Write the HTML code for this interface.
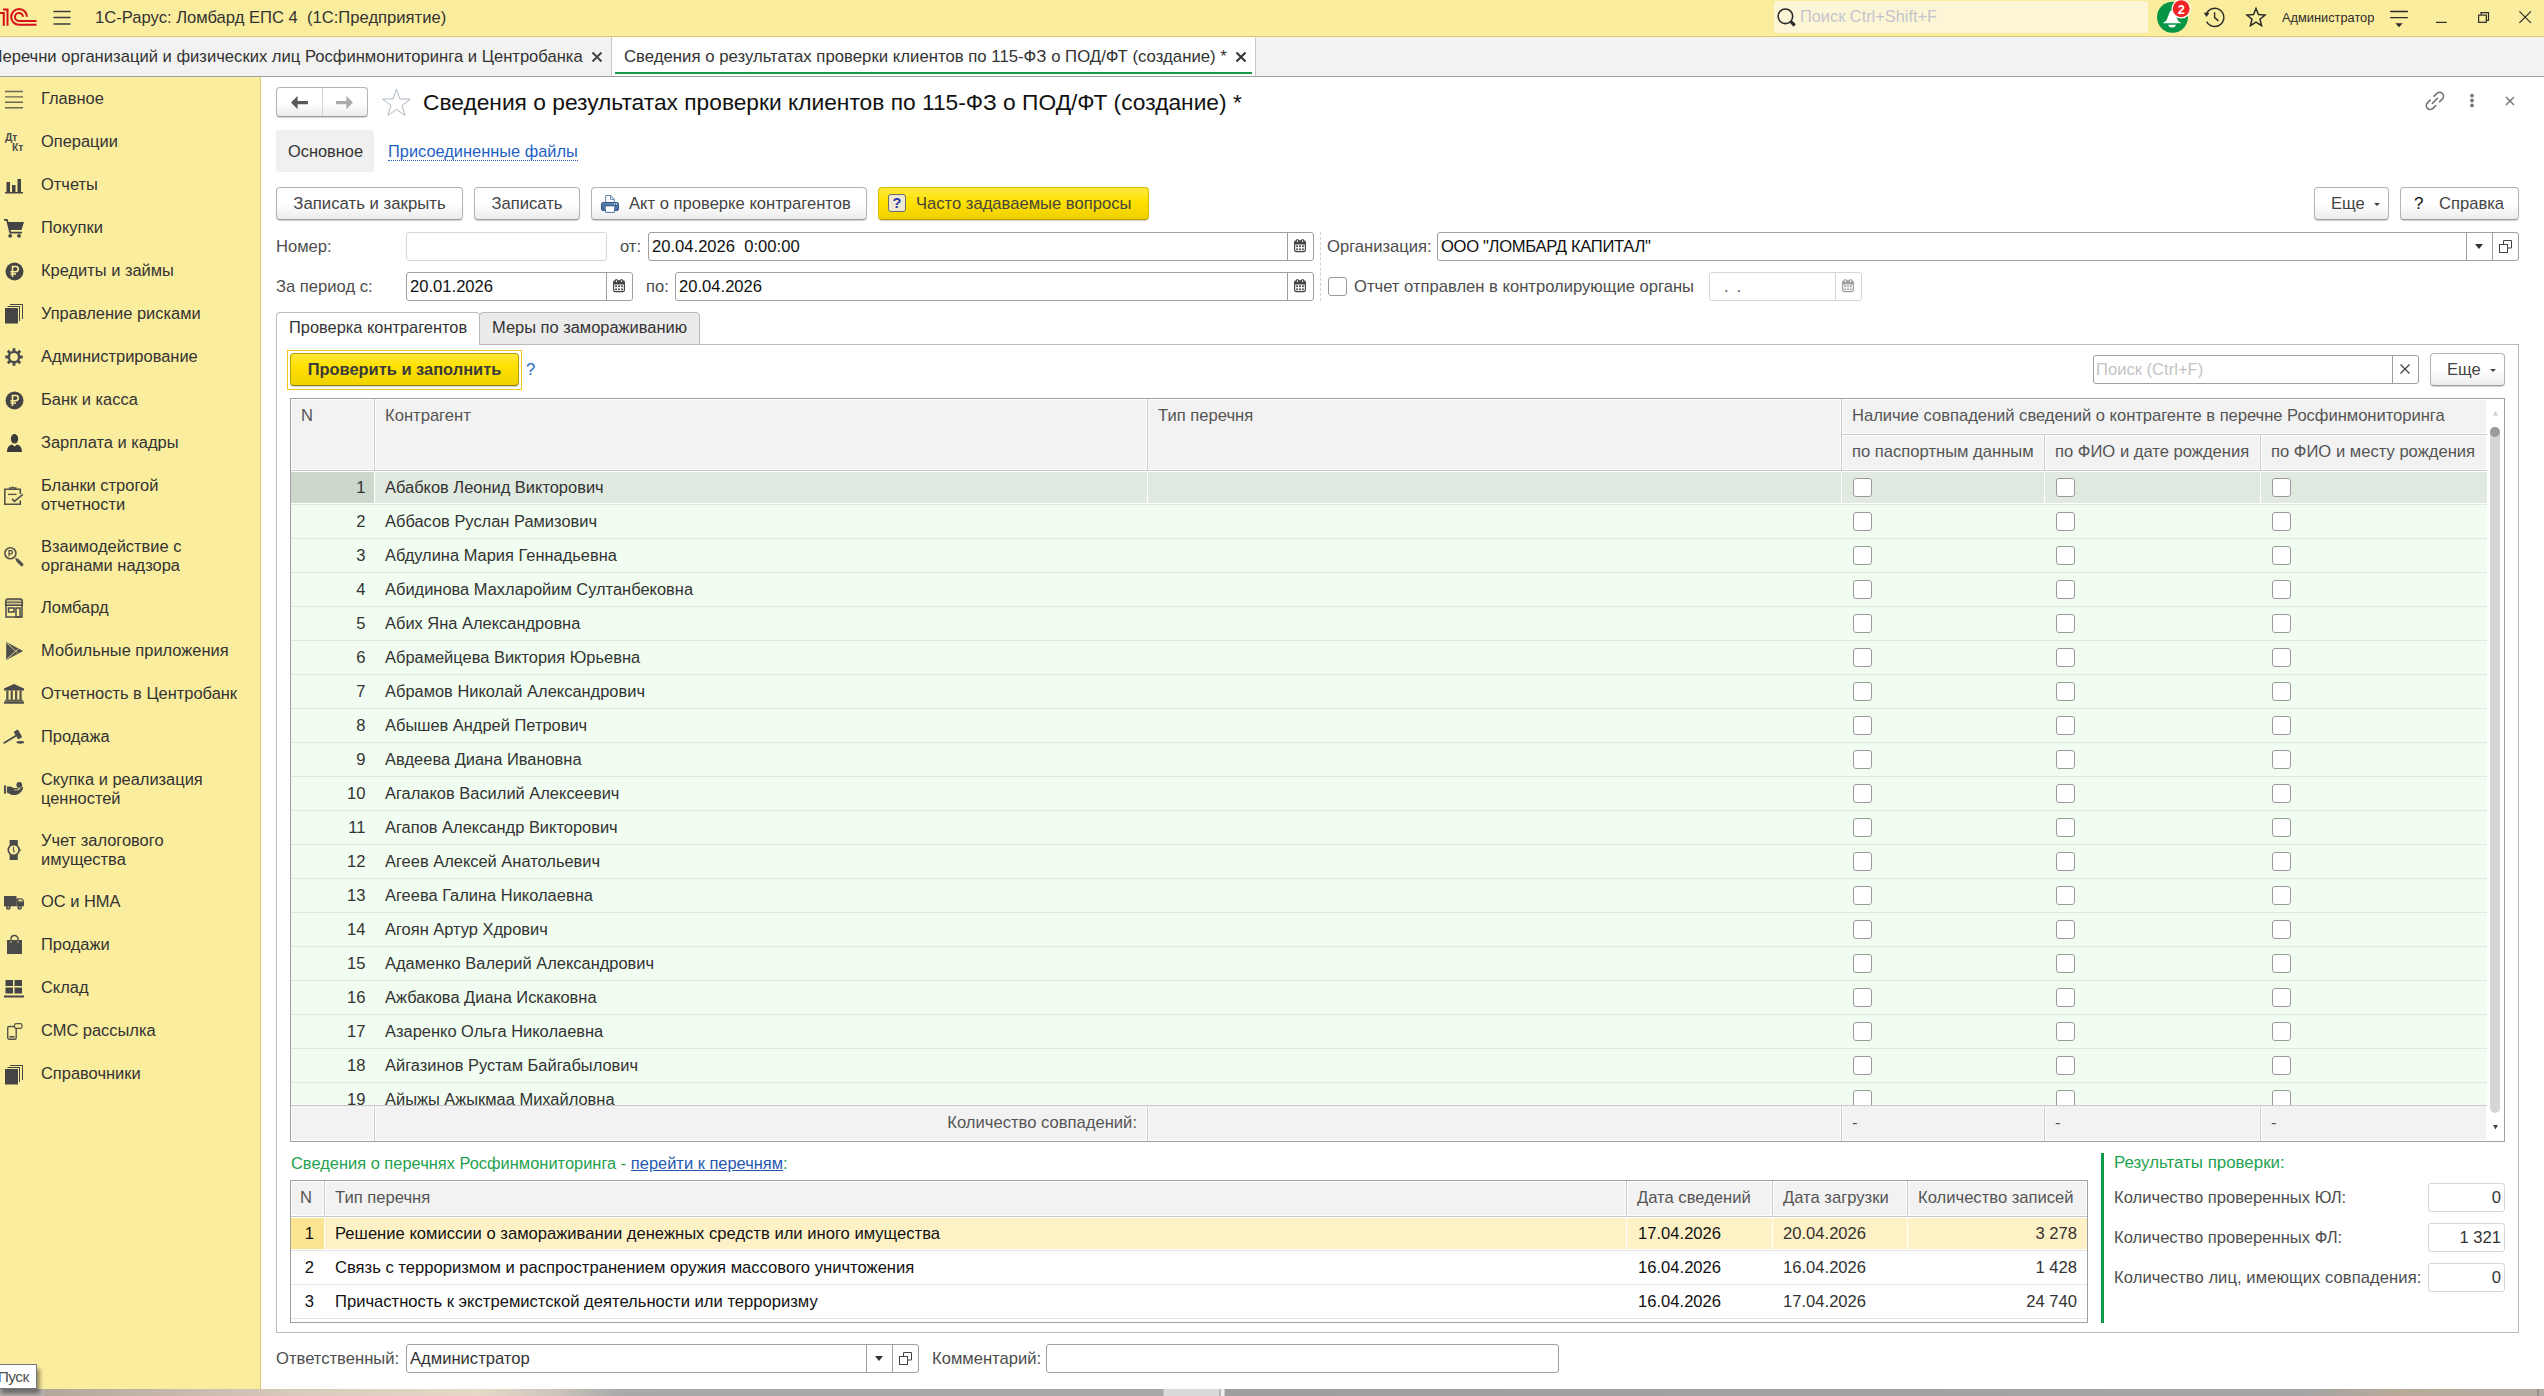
<!DOCTYPE html>
<html lang="ru"><head><meta charset="utf-8"><title>1С-Рарус: Ломбард ЕПС 4</title>
<style>
*{box-sizing:border-box;margin:0;padding:0}
html,body{width:2544px;height:1396px;overflow:hidden;background:#fff}
body{font-family:"Liberation Sans",Arial,sans-serif;font-size:16.6px;color:#333;position:relative;line-height:19px}
.a{position:absolute;white-space:nowrap}
svg{position:absolute;overflow:visible}
#titlebar{left:0;top:0;width:2544px;height:37px;background:#fbed9e;border-bottom:1px solid #d8c774}
#tabbar{left:0;top:37px;width:2544px;height:40px;background:#f2f2f2;border-bottom:1px solid #a0a0a0}
#side{left:0;top:77px;width:261px;height:1312px;background:#fbed9e;border-right:1px solid #d8c774}
.si{left:41px;font-size:16.45px;color:#333;line-height:19px;white-space:normal;width:215px}
.btn{height:33px;border:1px solid #b4b4b4;border-bottom-color:#9c9c9c;border-radius:4px;background:linear-gradient(#ffffff,#ffffff 50%,#ececec);box-shadow:0 1px 1px rgba(0,0,0,.18);color:#444;text-align:center;line-height:31px}
.inp{height:29px;border:1px solid #a0a0a0;border-radius:3px;background:#fff;color:#111;line-height:27px;padding-left:3px}
.inp.l{border-color:#d6d6d6}
.lbl{color:#4d4d4d;line-height:29px}
.ib{top:-1px;width:27px;height:29px;border-left:1px solid #a0a0a0}
.cb{width:19px;height:19px;border:1px solid #9a9a9a;border-radius:3px;background:#fff}
.th{color:#555;line-height:19px}
.row{left:0;height:34px;width:2196px;background:#f0fdf0;border-bottom:1px solid #e3e6e3}
.row .n{right:2121.5px;top:7px;color:#333}
.row .t{left:94px;top:7px;color:#333;font-size:16.45px}
.row .cb{top:7px}
.vl{width:1px;background:#d9d9d9}
.t2r{left:0;width:1795px;height:34px;border-bottom:1px solid #e4e4e4;color:#111}
</style></head><body>
<div id="titlebar" class="a">
 <svg id="logo" style="left:0;top:0" width="40" height="36" viewBox="0 0 40 36" fill="none" stroke="#d6101b" stroke-width="2">
  <path d="M3 9.400H7.500V25.800"/>
  <path d="M-2 13H3.800V25.800"/>
  <path d="M27 16.800A7.900 7.900 0 1 0 19.100 24.800H36.500"/>
  <path d="M23 16.800A4 4 0 1 0 19 21H36.500"/>
 </svg>
 <svg style="left:53px;top:10px" width="18" height="15" viewBox="0 0 18 15" stroke="#3c3c3c" stroke-width="1.5" stroke-linecap="round"><path d="M1 1.4H17M1 7.6H17M1 13.9H17"/></svg>
 <div class="a" style="left:95px;top:8px;font-size:16.6px;color:#333">1С-Рарус: Ломбард ЕПС 4&nbsp; (1С:Предприятие)</div>
 <div class="a" style="left:1774px;top:1px;width:374px;height:32px;background:#fdf6d6;border-radius:3px"></div>
 <svg style="left:1776px;top:7px" width="22" height="22" viewBox="0 0 22 22" fill="none" stroke="#2b2b2b" stroke-width="1.6"><circle cx="9.4" cy="9.3" r="7.3"/><path d="M14.9 14.7L18.7 18.5" stroke-width="3.200"/></svg>
 <div class="a" style="left:1800px;top:7px;font-size:16.35px;color:#c3c5cd">Поиск Ctrl+Shift+F</div>
 <svg style="left:2150px;top:0" width="44" height="36" viewBox="0 0 44 36"><circle cx="22.5" cy="17.3" r="15.5" fill="#059645"/><path d="M22 10.2c-1.2 0-2 .8-2.3 2L17 19c-.6 1.8-2 3-3.6 3.6v.7h17.4v-.7c-1.600-.600-3-1.800-3.600-3.600L24.300 12.200c-.3-1.200-1.100-2-2.300-2z" fill="#fff"/><path d="M18.4 24.700h7.400a3.700 2.700 0 0 1-7.400 0z" fill="#fff"/><circle cx="31.2" cy="8.800" r="9.100" fill="#f42323" stroke="#fff" stroke-width="1.200"/><text x="31.2" y="13.700" text-anchor="middle" font-family="Liberation Sans,sans-serif" font-size="12.800" font-weight="700" fill="#fff">2</text></svg>
 <svg style="left:2200px;top:0" width="28" height="36" viewBox="0 0 28 36" fill="none" stroke="#2b2b2b" stroke-width="1.400"><path d="M6.200 14.300A9.100 9.100 0 1 1 6.700 21.700"/><path d="M3.800 12.700H9.500L6.500 17z" fill="#2b2b2b" stroke="none"/><path d="M14.600 12.300V17.600L18.400 20.900"/></svg>
 <svg style="left:2244px;top:0" width="24" height="36" viewBox="0 0 24 36" fill="none" stroke="#2b2b2b" stroke-width="1.500" stroke-linejoin="miter"><path d="M12.00 8.50L14.47 14.60L21.04 15.06L15.99 19.30L17.58 25.69L12.00 22.20L6.42 25.69L8.01 19.30L2.96 15.06L9.53 14.60z"/></svg>
 <div class="a" style="left:2282px;top:10px;font-size:12.8px;color:#2b2b2b;line-height:16px">Администратор</div>
 <svg style="left:2390px;top:0" width="18" height="36" viewBox="0 0 18 36" stroke="#2b2b2b" stroke-width="1.3" stroke-linecap="round" fill="#2b2b2b"><path d="M.6 11.500H17.400M.6 17.600H17.400" fill="none"/><path d="M5.400 23.200h7.200l-3.600 4z" stroke="none"/></svg>
 <svg style="left:2436px;top:0" width="11" height="36" viewBox="0 0 11 36"><path d="M0 22.400H10.700" stroke="#2b2b2b" stroke-width="1.200"/></svg>
 <svg style="left:2470px;top:0" width="24" height="36" viewBox="0 0 24 36" fill="none" stroke="#2b2b2b" stroke-width="1.200"><rect x="8.600" y="15.100" width="7.700" height="7.200"/><path d="M11 15V12.700H18.500V20.400H16.400"/></svg>
 <svg style="left:2510px;top:0" width="30" height="36" viewBox="0 0 30 36" stroke="#2b2b2b" stroke-width="1.200"><path d="M9.400 11.300L20.900 22.800M20.900 11.300L9.400 22.800"/></svg>
</div>
<div id="tabbar" class="a">
 <div class="a" style="left:-9.5px;top:10px;font-size:16.6px;color:#333">Перечни организаций и физических лиц Росфинмониторинга и Центробанка</div>
 <svg style="left:592px;top:15px" width="10" height="10" viewBox="0 0 10 10" stroke="#444" stroke-width="2"><path d="M.5.5l9 9M9.500.5l-9 9"/></svg>
 <div class="a" style="left:611px;top:0;width:645px;height:39px;background:#fff;border-left:1px solid #c8c8c8;border-right:1px solid #c8c8c8"></div>
 <div class="a" style="left:615px;top:35px;width:637px;height:2px;background:#159a47"></div>
 <div class="a" style="left:624px;top:10px;font-size:16.75px;color:#333">Сведения о результатах проверки клиентов по 115-ФЗ о ПОД/ФТ (создание) *</div>
 <svg style="left:1236px;top:15px" width="10" height="10" viewBox="0 0 10 10" stroke="#333" stroke-width="2"><path d="M.5.5l9 9M9.500.5l-9 9"/></svg>
</div>
<div id="side" class="a">
<!-- y positions relative to side top (77) -->
<div class="a si" style="top:12px">Главное</div>
<div class="a si" style="top:55px">Операции</div>
<div class="a si" style="top:98px">Отчеты</div>
<div class="a si" style="top:141px">Покупки</div>
<div class="a si" style="top:184px">Кредиты и займы</div>
<div class="a si" style="top:227px">Управление рисками</div>
<div class="a si" style="top:270px">Администрирование</div>
<div class="a si" style="top:313px">Банк и касса</div>
<div class="a si" style="top:356px">Зарплата и кадры</div>
<div class="a si" style="top:399px">Бланки строгой<br>отчетности</div>
<div class="a si" style="top:460px">Взаимодействие с<br>органами надзора</div>
<div class="a si" style="top:521px">Ломбард</div>
<div class="a si" style="top:564px">Мобильные приложения</div>
<div class="a si" style="top:607px">Отчетность в Центробанк</div>
<div class="a si" style="top:650px">Продажа</div>
<div class="a si" style="top:693px">Скупка и реализация<br>ценностей</div>
<div class="a si" style="top:754px">Учет залогового<br>имущества</div>
<div class="a si" style="top:815px">ОС и НМА</div>
<div class="a si" style="top:858px">Продажи</div>
<div class="a si" style="top:901px">Склад</div>
<div class="a si" style="top:944px">СМС рассылка</div>
<div class="a si" style="top:987px">Справочники</div>
<!-- icons -->
<svg style="left:5px;top:13px" width="18" height="19" viewBox="0 0 18 19" stroke="#6b6753" stroke-width="1.4"><path d="M0 1.5H18M0 6.9H18M0 12.3H18M0 17.700H18"/></svg>
<div class="a" style="left:5px;top:55.5px;font-size:10.3px;font-weight:700;color:#4a4a4a;line-height:10px">Дт</div>
<div class="a" style="left:12px;top:66.3px;font-size:10.3px;font-weight:700;color:#4a4a4a;line-height:10px">Кт</div>
<svg style="left:5px;top:99px" width="18" height="18" viewBox="0 0 18 18" fill="#444"><rect x="0" y="16" width="18" height="1.500"/><rect x="1.500" y="6" width="3.500" height="10"/><rect x="7" y="9" width="3.500" height="7"/><rect x="12.500" y="3" width="3.500" height="13"/></svg>
<svg style="left:4px;top:142px" width="21" height="19" viewBox="0 0 21 19" fill="#444"><path d="M0 0h3.500l1 3H20l-2.500 8H6.500l.5 1.800h11v1.700H5.500L2.300 1.700H0z"/><circle cx="6.200" cy="16.800" r="1.900"/><circle cx="15" cy="16.800" r="1.900"/></svg>
<svg style="left:4.5px;top:184.600px" width="19" height="19" viewBox="0 0 19 19"><circle cx="9.500" cy="9.500" r="9" fill="#444"/><path d="M7.500 15V4.500h3.200a2.600 2.600 0 0 1 0 5.200H5.500M5.500 12h5.500" stroke="#fbed9e" stroke-width="1.600" fill="none"/></svg>
<svg style="left:5px;top:227px" width="19" height="20" viewBox="0 0 19 20" fill="#444"><rect x="0" y="4" width="13" height="15.500"/><path d="M2.500 2h12.500v15h-1V3H2.500zM5 0h13v15h-1V1H5z"/></svg>
<svg style="left:5.100px;top:271.300px" width="18" height="18" viewBox="0 0 18 18" fill="none" stroke="#4a4a4a"><path d="M14.80 9.00L17.70 9.00M13.10 13.10L15.15 15.15M9.00 14.80L9.00 17.70M4.90 13.10L2.85 15.15M3.20 9.00L0.30 9.00M4.90 4.90L2.85 2.85M9.00 3.20L9.00 0.30M13.10 4.90L15.15 2.85" stroke-width="2.8"/><circle cx="9" cy="9" r="5.100" stroke-width="2.400"/></svg>
<svg style="left:4.5px;top:313.600px" width="19" height="19" viewBox="0 0 19 19"><circle cx="9.500" cy="9.500" r="9" fill="#444"/><path d="M7.500 15V4.500h3.200a2.600 2.600 0 0 1 0 5.200H5.500M5.500 12h5.500" stroke="#fbed9e" stroke-width="1.600" fill="none"/></svg>
<svg style="left:7px;top:357px" width="15" height="18" viewBox="0 0 15 18" fill="#3a3a3a"><ellipse cx="7.5" cy="4.800" rx="3.700" ry="4.800"/><path d="M0 18c0-5 2.600-6.800 5-7.400l2.500 1.800 2.500-1.800c2.400.6 5 2.400 5 7.400z"/></svg>
<svg style="left:4px;top:408.600px" width="21" height="20" viewBox="0 0 21 20" fill="none" stroke="#55524a" stroke-width="1.600"><path d="M16.300 8V3.300H.8V18.200H16.300V14.500"/><path d="M5.700 3.300V2h2.200a.9.900 0 0 1 1.800 0h2.200v1.300" stroke-width="1.300"/><path d="M4 8.400h8.500" stroke-width="1.300"/><path d="M8 13l2.500 2.300 8.300-7" stroke-width="1.700"/></svg>
<svg style="left:4px;top:468.5px" width="21" height="21" viewBox="0 0 21 21" fill="none" stroke="#55524a"><circle cx="6.4" cy="7.2" r="5.5" stroke-width="1.6"/><path d="M11.6 12.4l1.600 1.600" stroke-width="1.600"/><path d="M13.800 14.600l4 4" stroke-width="3.300" stroke-linecap="round"/><path d="M5 10.200V4.700h1.900a1.600 1.600 0 0 1 0 3.200H5" stroke-width="1.300"/></svg>
<svg style="left:5px;top:521px" width="18" height="20" viewBox="0 0 18 20" fill="none" stroke="#4a4a4a" stroke-width="1.500"><path d="M1 7V19h16V7"/><path d="M.7 7.200V3.500C.7 1.800 1.800 1 3 1h12c1.200 0 2.300.8 2.300 2.500v3.700z" fill="#4a4a4a" fill-opacity=".25"/><path d="M1 4.200h16" stroke-width="1"/><rect x="3.500" y="10" width="5.500" height="4"/><rect x="11" y="10" width="4" height="9"/></svg>
<svg style="left:5.5px;top:564.6px" width="17" height="18" viewBox="0 0 17 18"><path d="M.6.6L16.4 9 .6 17.400z" fill="#4d4d4d" stroke="#55524a" stroke-width=".8" stroke-linejoin="round"/><path d="M1 1L11.800 11.300M1 17L12.300 6.900" fill="none" stroke="#d9cd8c" stroke-width="1"/></svg>
<svg style="left:4px;top:607px" width="20" height="20" viewBox="0 0 20 20" fill="#4a4a4a"><path d="M10 0L0 4.600v1.800h20V4.600z"/><rect x="2.200" y="6.400" width="2.300" height="9.400" fill="#5a574b"/><rect x="6.600" y="6.400" width="2.300" height="9.400" fill="#5a574b"/><rect x="11" y="6.400" width="2.300" height="9.400" fill="#5a574b"/><rect x="15.400" y="6.400" width="2.300" height="9.400" fill="#5a574b"/><rect x="1.200" y="15.600" width="17.600" height="1.900" fill="#5a574b"/><rect x="0" y="17.500" width="20" height="2.200"/></svg>
<svg style="left:4px;top:652px" width="21" height="16" viewBox="0 0 21 16" fill="#4a4a4a"><path d="M.4 13.700L11.500 7" stroke="#4a4a4a" stroke-width="1.900" stroke-linecap="round" fill="none"/><g transform="translate(13.900 5.400) rotate(-30.500)"><rect x="-2.400" y="-4.400" width="4.800" height="8.800" rx=".8"/></g><ellipse cx="16.300" cy="13.300" rx="3.900" ry="1.400"/></svg>
<svg style="left:4px;top:705.300px" width="20" height="14" viewBox="0 0 20 14" fill="#4a4a4a"><rect x="0" y="3.400" width="1.900" height="8.200"/><path d="M2.900 4.600h3.600l3.400 1.500h3.900c.9 0 .9 1.500 0 1.500h-3.600l-.2.600h4.300l3.400-3c.9-.7 2 .4 1.300 1.300-1.500 4-4.500 6.500-8.500 6.500-2.500 0-5-1-7.600-2.600z"/><circle cx="15.300" cy="2.900" r="2.900"/></svg>
<svg style="left:6.500px;top:763px" width="15" height="20" viewBox="0 0 15 20"><path d="M2.600 0h8.200v5.500H2.600zM2.600 14.500h8.200V20H2.600z" fill="#4a4a4a"/><circle cx="6.700" cy="10" r="5.400" fill="#fbed9e" stroke="#4a4a4a" stroke-width="1.600"/><path d="M6.500 6.800v3.400l1 2.300" stroke="#4a4a4a" stroke-width="1.100" fill="none"/><path d="M12.600 8.800l1.800 1.200-1.800 1.200z" fill="#4a4a4a"/></svg>
<svg style="left:4px;top:819.300px" width="20" height="14" viewBox="0 0 20 14" fill="#4a4a4a"><path d="M0 0h12.500v10.300H0z"/><path d="M12.400 2.300h4.400c1.700 0 3.200 1.500 3.200 3.200v4.800h-7.600z"/><path d="M14.300 3.300h2.500c1.100 0 2.100.9 2.200 2.200h-4.700z" fill="#d8cc8e"/><circle cx="4.300" cy="11.400" r="2.300"/><circle cx="15.600" cy="11.400" r="2.300"/><circle cx="4.300" cy="11.400" r=".8" fill="#cfc487"/><circle cx="15.600" cy="11.400" r=".8" fill="#cfc487"/></svg>
<svg style="left:7px;top:858px" width="15" height="19" viewBox="0 0 15 19"><path d="M0 5h15V19H0z" fill="#4a4a4a"/><path d="M4 8V3.700a3.500 3.200 0 0 1 7 0V8" fill="none" stroke="#4a4a4a" stroke-width="1.400"/><path d="M4 8V5.500M11 8V5.500" stroke="#fbed9e" stroke-width=".6" fill="none"/></svg>
<svg style="left:4px;top:902.500px" width="20" height="19" viewBox="0 0 20 19" fill="#444"><rect x="1.500" y="0" width="7.500" height="6"/><rect x="10.500" y="0" width="7.500" height="6"/><rect x="1.500" y="7.500" width="7.500" height="6"/><rect x="10.500" y="7.500" width="7.500" height="6"/><rect x="0" y="15.500" width="20" height="2"/></svg>
<svg style="left:6.500px;top:945.500px" width="16" height="17" viewBox="0 0 16 17" fill="none" stroke="#55524a" stroke-width="1.400"><rect x=".7" y="3.500" width="8.500" height="12.800" rx="1.500"/><rect x="7.500" y=".7" width="7.500" height="4.600" rx="1.600" fill="#fbed9e" stroke-width="1.200"/><path d="M2.500 13.800h5" stroke-width="1.600"/></svg>
<svg style="left:5px;top:987.500px" width="19" height="20" viewBox="0 0 19 20" fill="#444"><rect x="0" y="4" width="13" height="15.500"/><path d="M2.500 2h12.500v15h-1V3H2.500zM5 0h13v15h-1V1H5z"/></svg>
</div>
<div id="main" class="a" style="left:0;top:0;width:2544px;height:1396px">
<!-- nav -->
<div class="a btn" style="left:276px;top:87px;width:92px;height:30px"></div>
<div class="a" style="left:322px;top:88px;width:1px;height:28px;background:#d4d4d4"></div>
<svg style="left:291px;top:96px" width="17" height="13.2" viewBox="0 0 17 13.2" fill="#585858"><path d="M0 6.6L6.6 0V5.1H17V8.2H6.6V13.2z"/></svg>
<svg style="left:336px;top:96px" width="17" height="13.2" viewBox="0 0 17 13.2" fill="#a9a9a9"><path d="M17 6.6L10.4 0V5.1H0V8.2H10.4V13.2z"/></svg>
<svg style="left:380px;top:85px" width="33" height="34" viewBox="0 0 33 34" fill="none" stroke="#aeb8c4" stroke-width="1" stroke-linejoin="miter"><path d="M16.45 4.05L19.86 13.96L30.34 14.14L21.97 20.44L25.03 30.46L16.45 24.45L7.87 30.46L10.93 20.44L2.56 14.14L13.04 13.96z"/></svg>
<div class="a" style="left:423px;top:88px;font-size:22.76px;line-height:28px;color:#111">Сведения о результатах проверки клиентов по 115-ФЗ о ПОД/ФТ (создание) *</div>
<svg style="left:2420px;top:86px" width="30" height="30" viewBox="0 0 30 30" fill="none" stroke="#707070" stroke-width="1.6" stroke-linecap="round"><g transform="translate(14.9 14.9) rotate(-45)"><path d="M2.8 -3.9H6.65A3.9 3.9 0 0 1 6.65 3.9H2.8"/><path d="M-2.8 3.9H-6.65A3.9 3.9 0 0 1 -6.65 -3.9H-2.8"/><path d="M-3.7 0H3.7"/></g></svg>
<svg style="left:2470px;top:93px" width="4" height="16" viewBox="0 0 4 16" fill="#777"><circle cx="2" cy="2.6" r="1.9"/><circle cx="2" cy="7.5" r="1.9"/><circle cx="2" cy="12.400" r="1.9"/></svg>
<svg style="left:2506px;top:97px" width="8" height="8" viewBox="0 0 8 8" stroke="#777" stroke-width="1.5"><path d="M0 0l8 8M8 0L0 8"/></svg>
<!-- sub tabs -->
<div class="a" style="left:276px;top:130px;width:98px;height:42px;background:#f0f0f0;border-radius:3px"></div>
<div class="a" style="left:288px;top:142px;color:#333;font-size:16.4px">Основное</div>
<div class="a" style="left:388px;top:142px;color:#1f5fc4;border-bottom:1px dotted #1f5fc4;line-height:18px;font-size:16.4px">Присоединенные файлы</div>
<!-- command bar -->
<div class="a btn" style="left:276px;top:187px;width:187px;font-size:16.75px">Записать и закрыть</div>
<div class="a btn" style="left:474px;top:187px;width:106px">Записать</div>
<div class="a btn" style="left:591px;top:187px;width:276px;text-align:left;padding-left:37px">Акт о проверке контрагентов</div>
<svg id="prn" style="left:600px;top:194px" width="20" height="20" viewBox="0 0 20 20"><defs><linearGradient id="pg" x1="0" y1="0" x2="0" y2="1"><stop offset="0" stop-color="#6a90bd"/><stop offset=".35" stop-color="#5279a6"/><stop offset="1" stop-color="#466c9a"/></linearGradient></defs><path d="M5.7 8.5V1.5h5l3.6 3.7V8.5z" fill="#fdfdfe" stroke="#6482a8" stroke-width="1"/><path d="M10.6 1.6V5.300h3.600" fill="none" stroke="#6482a8" stroke-width="1"/><rect x="1.500" y="8.500" width="17" height="8" rx="1.600" fill="url(#pg)" stroke="#2f5586" stroke-width="1"/><path d="M4 11.400H16.800" stroke="#34547f" stroke-width="1"/><path d="M5.200 11.900h9.600l-.4 6.500H5.600z" fill="#fff" stroke="#5279a6" stroke-width="1"/><circle cx="14.400" cy="9.900" r=".55" fill="#fff"/><circle cx="16.500" cy="9.900" r=".55" fill="#fff"/></svg>
<div class="a btn" style="left:878px;top:187px;width:271px;background:linear-gradient(#ffe940,#ffe100 45%,#efd000);border-color:#d9bc00;border-bottom-color:#b79c00;text-align:left;padding-left:37px;color:#46463a">Часто задаваемые вопросы</div>
<div class="a" style="left:888px;top:194px;width:18px;height:18px;border:1px solid #6a6a6a;border-radius:3px;background:#efe9d2;color:#2a35b8;font-size:14.5px;font-weight:700;line-height:16px;text-align:center">?</div>
<div class="a btn" style="left:2314px;top:187px;width:75px;text-align:left;padding-left:16px">Еще</div>
<svg style="left:2374px;top:203px" width="6" height="3" viewBox="0 0 6 3" fill="#444"><path d="M0 0h6L3 3z"/></svg>
<div class="a btn" style="left:2400px;top:187px;width:119px;text-align:left;padding-left:38px">Справка</div>
<div class="a" style="left:2414px;top:194px;color:#111;font-size:17px;line-height:20px">?</div>
<!-- form row 1 -->
<div class="a lbl" style="left:276px;top:232px">Номер:</div>
<div class="a inp l" style="left:406px;top:232px;width:201px"></div>
<div class="a lbl" style="left:620px;top:232px">от:</div>
<div class="a inp" style="left:648px;top:232px;width:666px">20.04.2026&nbsp; 0:00:00<div class="a ib" style="right:-1px"></div></div>
<div class="a lbl" style="left:1327px;top:232px">Организация:</div>
<div class="a inp" style="left:1437px;top:232px;width:1082px"><span style="letter-spacing:-.33px">ООО "ЛОМБАРД КАПИТАЛ"</span><div class="a ib" style="right:25px"></div><div class="a ib" style="right:-1px"></div></div>
<svg style="left:2475px;top:244px" width="8" height="5" viewBox="0 0 8 5" fill="#333"><path d="M0 0h8L4 5z"/></svg>
<svg style="left:2499px;top:240px" width="13" height="13" viewBox="0 0 13 13" fill="none" stroke="#444" stroke-width="1"><path d="M4.500 4V.5h8V8H9"/><rect x=".5" y="4.500" width="8" height="8"/></svg>
<!-- form row 2 -->
<div class="a lbl" style="left:276px;top:272px">За период с:</div>
<div class="a inp" style="left:406px;top:272px;width:227px">20.01.2026<div class="a ib" style="right:-1px"></div></div>
<div class="a lbl" style="left:646px;top:272px">по:</div>
<div class="a inp" style="left:675px;top:272px;width:639px">20.04.2026<div class="a ib" style="right:-1px"></div></div>
<div class="a" style="left:1320px;top:232px;width:0;height:69px;border-left:1px dashed #d0d0d0"></div>
<div class="a cb" style="left:1328px;top:277px"></div>
<div class="a lbl" style="left:1354px;top:272px">Отчет отправлен в контролирующие органы</div>
<div class="a inp l" style="left:1709px;top:272px;width:153px;color:#555;padding-left:14px;letter-spacing:8px">..<div class="a ib" style="right:-1px;border-left-color:#d6d6d6"></div></div>
<!-- calendar icons -->
<svg style="left:1294px;top:238.800px" width="12" height="13.200" viewBox="0 0 12 13.200"><rect x=".6" y="1.900" width="10.800" height="10.700" rx="1.600" fill="#fff" stroke="#444" stroke-width="1.200"/><path d="M.6 5.400V3.500a1.600 1.600 0 0 1 1.600-1.600h7.600a1.600 1.600 0 0 1 1.600 1.600V5.400z" fill="#444"/><ellipse cx="3.400" cy="2.100" rx="1.600" ry="2" fill="#444"/><ellipse cx="8.600" cy="2.100" rx="1.600" ry="2" fill="#444"/><ellipse cx="3.400" cy="2.200" rx=".6" ry="1" fill="#fff"/><ellipse cx="8.600" cy="2.200" rx=".6" ry="1" fill="#fff"/><g fill="#333"><rect x="2.200" y="6.400" width="1.700" height="1.700"/><rect x="5.150" y="6.400" width="1.700" height="1.700"/><rect x="8.100" y="6.400" width="1.700" height="1.700"/><rect x="2.200" y="9.500" width="1.700" height="1.700"/><rect x="5.150" y="9.500" width="1.700" height="1.700"/><rect x="8.100" y="9.500" width="1.700" height="1.700"/></g></svg>
<svg style="left:613px;top:278.800px" width="12" height="13.200" viewBox="0 0 12 13.200"><rect x=".6" y="1.900" width="10.800" height="10.700" rx="1.600" fill="#fff" stroke="#444" stroke-width="1.200"/><path d="M.6 5.400V3.500a1.600 1.600 0 0 1 1.600-1.600h7.600a1.600 1.600 0 0 1 1.600 1.600V5.400z" fill="#444"/><ellipse cx="3.400" cy="2.100" rx="1.600" ry="2" fill="#444"/><ellipse cx="8.600" cy="2.100" rx="1.600" ry="2" fill="#444"/><ellipse cx="3.400" cy="2.200" rx=".6" ry="1" fill="#fff"/><ellipse cx="8.600" cy="2.200" rx=".6" ry="1" fill="#fff"/><g fill="#333"><rect x="2.200" y="6.400" width="1.700" height="1.700"/><rect x="5.150" y="6.400" width="1.700" height="1.700"/><rect x="8.100" y="6.400" width="1.700" height="1.700"/><rect x="2.200" y="9.500" width="1.700" height="1.700"/><rect x="5.150" y="9.500" width="1.700" height="1.700"/><rect x="8.100" y="9.500" width="1.700" height="1.700"/></g></svg>
<svg style="left:1294px;top:278.800px" width="12" height="13.200" viewBox="0 0 12 13.200"><rect x=".6" y="1.900" width="10.800" height="10.700" rx="1.600" fill="#fff" stroke="#444" stroke-width="1.200"/><path d="M.6 5.400V3.500a1.600 1.600 0 0 1 1.600-1.600h7.600a1.600 1.600 0 0 1 1.600 1.600V5.400z" fill="#444"/><ellipse cx="3.400" cy="2.100" rx="1.600" ry="2" fill="#444"/><ellipse cx="8.600" cy="2.100" rx="1.600" ry="2" fill="#444"/><ellipse cx="3.400" cy="2.200" rx=".6" ry="1" fill="#fff"/><ellipse cx="8.600" cy="2.200" rx=".6" ry="1" fill="#fff"/><g fill="#333"><rect x="2.200" y="6.400" width="1.700" height="1.700"/><rect x="5.150" y="6.400" width="1.700" height="1.700"/><rect x="8.100" y="6.400" width="1.700" height="1.700"/><rect x="2.200" y="9.500" width="1.700" height="1.700"/><rect x="5.150" y="9.500" width="1.700" height="1.700"/><rect x="8.100" y="9.500" width="1.700" height="1.700"/></g></svg>
<svg style="left:1842px;top:278.800px;opacity:.5" width="12" height="13.200" viewBox="0 0 12 13.200"><rect x=".6" y="1.900" width="10.800" height="10.700" rx="1.600" fill="#fff" stroke="#444" stroke-width="1.200"/><path d="M.6 5.400V3.500a1.600 1.600 0 0 1 1.600-1.600h7.600a1.600 1.600 0 0 1 1.600 1.600V5.400z" fill="#444"/><ellipse cx="3.400" cy="2.100" rx="1.600" ry="2" fill="#444"/><ellipse cx="8.600" cy="2.100" rx="1.600" ry="2" fill="#444"/><ellipse cx="3.400" cy="2.200" rx=".6" ry="1" fill="#fff"/><ellipse cx="8.600" cy="2.200" rx=".6" ry="1" fill="#fff"/><g fill="#333"><rect x="2.200" y="6.400" width="1.700" height="1.700"/><rect x="5.150" y="6.400" width="1.700" height="1.700"/><rect x="8.100" y="6.400" width="1.700" height="1.700"/><rect x="2.200" y="9.500" width="1.700" height="1.700"/><rect x="5.150" y="9.500" width="1.700" height="1.700"/><rect x="8.100" y="9.500" width="1.700" height="1.700"/></g></svg>
<!-- page tabs -->
<div class="a" style="left:276px;top:344px;width:2243px;height:989px;border:1px solid #b9b9b9"></div>
<div class="a" style="left:276px;top:312px;width:204px;height:33px;background:#fff;border:1px solid #b9b9b9;border-bottom:none;border-radius:4px 4px 0 0"></div>
<div class="a" style="left:289px;top:318px;color:#333;font-size:16.4px">Проверка контрагентов</div>
<div class="a" style="left:479px;top:312px;width:221px;height:33px;background:#ebebeb;border:1px solid #b9b9b9;border-radius:4px 4px 0 0"></div>
<div class="a" style="left:492px;top:318px;color:#333;font-size:16.45px">Меры по замораживанию</div>
<!-- panel toolbar -->
<div class="a" style="left:287px;top:350px;width:235px;height:40px;border:1px solid #f5c51a;background:#fff"></div>
<div class="a btn" style="left:290px;top:353px;width:229px;height:33px;background:linear-gradient(#ffe73a,#ffe100 40%,#f0d200);border-color:#b8a000;border-bottom-color:#8f7c00;color:#3a3a3a;font-weight:700;line-height:30px;font-size:16.45px">Проверить и заполнить</div>
<div class="a" style="left:526px;top:360px;color:#1a6fc0">?</div>
<div class="a inp" style="left:2093px;top:355px;width:326px;color:#c4c4c4;padding-left:2px">Поиск (Ctrl+F)<div class="a ib" style="right:-1px"></div></div>
<svg style="left:2400px;top:364px" width="10" height="10" viewBox="0 0 10 10" stroke="#444" stroke-width="1.300"><path d="M.5.5l9 9M9.500.5l-9 9"/></svg>
<div class="a btn" style="left:2430px;top:353px;width:75px;text-align:left;padding-left:16px">Еще</div>
<svg style="left:2490px;top:369px" width="6" height="3" viewBox="0 0 6 3" fill="#444"><path d="M0 0h6L3 3z"/></svg>
<div id="tbl" class="a" style="left:290px;top:398px;width:2215px;height:744px;border:1px solid #a0a0a0;background:#fff;overflow:hidden">
<div class="a" style="left:1px;top:1px;width:81px;height:69px;background:#f2f2f2"></div>
<div class="a" style="left:85px;top:1px;width:770px;height:69px;background:#f2f2f2"></div>
<div class="a" style="left:858px;top:1px;width:691px;height:69px;background:#f2f2f2"></div>
<div class="a" style="left:1552px;top:1px;width:643px;height:33px;background:#f2f2f2"></div>
<div class="a" style="left:1552px;top:37px;width:200px;height:33px;background:#f2f2f2"></div>
<div class="a" style="left:1755px;top:37px;width:213px;height:33px;background:#f2f2f2"></div>
<div class="a" style="left:1971px;top:37px;width:224px;height:33px;background:#f2f2f2"></div>
<div class="a" style="left:83px;top:0px;width:1px;height:71px;background:#c8c8c8"></div>
<div class="a" style="left:856px;top:0px;width:1px;height:71px;background:#c8c8c8"></div>
<div class="a" style="left:1550px;top:0px;width:1px;height:71px;background:#c8c8c8"></div>
<div class="a" style="left:1753px;top:36px;width:1px;height:35px;background:#c8c8c8"></div>
<div class="a" style="left:1969px;top:36px;width:1px;height:35px;background:#c8c8c8"></div>
<div class="a" style="left:1551px;top:35px;width:645px;height:1px;background:#c8c8c8"></div>
<div class="a" style="left:0px;top:71px;width:2196px;height:1px;background:#c8c8c8"></div>
<div class="a th" style="left:10px;top:7px"><span>N</span></div>
<div class="a th" style="left:94px;top:7px"><span>Контрагент</span></div>
<div class="a th" style="left:867px;top:7px"><span>Тип перечня</span></div>
<div class="a th" style="left:1561px;top:7px"><span style="letter-spacing:-.04px">Наличие совпадений сведений о контрагенте в перечне Росфинмониторинга</span></div>
<div class="a th" style="left:1561px;top:43px"><span>по паспортным данным</span></div>
<div class="a th" style="left:1764px;top:43px"><span>по ФИО и дате рождения</span></div>
<div class="a th" style="left:1980px;top:43px"><span>по ФИО и месту рождения</span></div>
<div class="a" style="left:0;top:72px;width:2196px;height:634px;overflow:hidden">
<div class="a row" style="top:0px;background:#fff;">
<div class="a" style="left:0px;top:1px;width:83px;height:31px;background:#cdd8cd"></div>
<div class="a" style="left:84px;top:1px;width:772px;height:31px;background:#e0eae0"></div>
<div class="a" style="left:857px;top:1px;width:693px;height:31px;background:#e0eae0"></div>
<div class="a" style="left:1551px;top:1px;width:202px;height:31px;background:#e0eae0"></div>
<div class="a" style="left:1754px;top:1px;width:215px;height:31px;background:#e0eae0"></div>
<div class="a" style="left:1970px;top:1px;width:226px;height:31px;background:#e0eae0"></div>
<div class="a n">1</div><div class="a t">Абабков Леонид Викторович</div>
<div class="a cb" style="left:1562px"></div>
<div class="a cb" style="left:1765px"></div>
<div class="a cb" style="left:1981px"></div>
</div>
<div class="a row" style="top:34px;">
<div class="a n">2</div><div class="a t">Аббасов Руслан Рамизович</div>
<div class="a cb" style="left:1562px"></div>
<div class="a cb" style="left:1765px"></div>
<div class="a cb" style="left:1981px"></div>
</div>
<div class="a row" style="top:68px;">
<div class="a n">3</div><div class="a t">Абдулина Мария Геннадьевна</div>
<div class="a cb" style="left:1562px"></div>
<div class="a cb" style="left:1765px"></div>
<div class="a cb" style="left:1981px"></div>
</div>
<div class="a row" style="top:102px;">
<div class="a n">4</div><div class="a t">Абидинова Махларойим Султанбековна</div>
<div class="a cb" style="left:1562px"></div>
<div class="a cb" style="left:1765px"></div>
<div class="a cb" style="left:1981px"></div>
</div>
<div class="a row" style="top:136px;">
<div class="a n">5</div><div class="a t">Абих Яна Александровна</div>
<div class="a cb" style="left:1562px"></div>
<div class="a cb" style="left:1765px"></div>
<div class="a cb" style="left:1981px"></div>
</div>
<div class="a row" style="top:170px;">
<div class="a n">6</div><div class="a t">Абрамейцева Виктория Юрьевна</div>
<div class="a cb" style="left:1562px"></div>
<div class="a cb" style="left:1765px"></div>
<div class="a cb" style="left:1981px"></div>
</div>
<div class="a row" style="top:204px;">
<div class="a n">7</div><div class="a t">Абрамов Николай Александрович</div>
<div class="a cb" style="left:1562px"></div>
<div class="a cb" style="left:1765px"></div>
<div class="a cb" style="left:1981px"></div>
</div>
<div class="a row" style="top:238px;">
<div class="a n">8</div><div class="a t">Абышев Андрей Петрович</div>
<div class="a cb" style="left:1562px"></div>
<div class="a cb" style="left:1765px"></div>
<div class="a cb" style="left:1981px"></div>
</div>
<div class="a row" style="top:272px;">
<div class="a n">9</div><div class="a t">Авдеева Диана Ивановна</div>
<div class="a cb" style="left:1562px"></div>
<div class="a cb" style="left:1765px"></div>
<div class="a cb" style="left:1981px"></div>
</div>
<div class="a row" style="top:306px;">
<div class="a n">10</div><div class="a t">Агалаков Василий Алексеевич</div>
<div class="a cb" style="left:1562px"></div>
<div class="a cb" style="left:1765px"></div>
<div class="a cb" style="left:1981px"></div>
</div>
<div class="a row" style="top:340px;">
<div class="a n">11</div><div class="a t">Агапов Александр Викторович</div>
<div class="a cb" style="left:1562px"></div>
<div class="a cb" style="left:1765px"></div>
<div class="a cb" style="left:1981px"></div>
</div>
<div class="a row" style="top:374px;">
<div class="a n">12</div><div class="a t">Агеев Алексей Анатольевич</div>
<div class="a cb" style="left:1562px"></div>
<div class="a cb" style="left:1765px"></div>
<div class="a cb" style="left:1981px"></div>
</div>
<div class="a row" style="top:408px;">
<div class="a n">13</div><div class="a t">Агеева Галина Николаевна</div>
<div class="a cb" style="left:1562px"></div>
<div class="a cb" style="left:1765px"></div>
<div class="a cb" style="left:1981px"></div>
</div>
<div class="a row" style="top:442px;">
<div class="a n">14</div><div class="a t">Агоян Артур Хдрович</div>
<div class="a cb" style="left:1562px"></div>
<div class="a cb" style="left:1765px"></div>
<div class="a cb" style="left:1981px"></div>
</div>
<div class="a row" style="top:476px;">
<div class="a n">15</div><div class="a t">Адаменко Валерий Александрович</div>
<div class="a cb" style="left:1562px"></div>
<div class="a cb" style="left:1765px"></div>
<div class="a cb" style="left:1981px"></div>
</div>
<div class="a row" style="top:510px;">
<div class="a n">16</div><div class="a t">Ажбакова Диана Искаковна</div>
<div class="a cb" style="left:1562px"></div>
<div class="a cb" style="left:1765px"></div>
<div class="a cb" style="left:1981px"></div>
</div>
<div class="a row" style="top:544px;">
<div class="a n">17</div><div class="a t">Азаренко Ольга Николаевна</div>
<div class="a cb" style="left:1562px"></div>
<div class="a cb" style="left:1765px"></div>
<div class="a cb" style="left:1981px"></div>
</div>
<div class="a row" style="top:578px;">
<div class="a n">18</div><div class="a t">Айгазинов Рустам Байгабылович</div>
<div class="a cb" style="left:1562px"></div>
<div class="a cb" style="left:1765px"></div>
<div class="a cb" style="left:1981px"></div>
</div>
<div class="a row" style="top:612px;">
<div class="a n">19</div><div class="a t">Айыжы Ажыкмаа Михайловна</div>
<div class="a cb" style="left:1562px"></div>
<div class="a cb" style="left:1765px"></div>
<div class="a cb" style="left:1981px"></div>
</div>
</div>
<div class="a" style="left:0px;top:706px;width:2196px;height:1px;background:#c8c8c8"></div>
<div class="a" style="left:1px;top:707px;width:81px;height:34px;background:#f2f2f2"></div>
<div class="a" style="left:85px;top:707px;width:770px;height:34px;background:#f2f2f2"></div>
<div class="a" style="left:858px;top:707px;width:691px;height:34px;background:#f2f2f2"></div>
<div class="a" style="left:1552px;top:707px;width:200px;height:34px;background:#f2f2f2"></div>
<div class="a" style="left:1755px;top:707px;width:213px;height:34px;background:#f2f2f2"></div>
<div class="a" style="left:1971px;top:707px;width:224px;height:34px;background:#f2f2f2"></div>
<div class="a" style="left:83px;top:707px;width:1px;height:35px;background:#c8c8c8"></div>
<div class="a" style="left:856px;top:707px;width:1px;height:35px;background:#c8c8c8"></div>
<div class="a" style="left:1550px;top:707px;width:1px;height:35px;background:#c8c8c8"></div>
<div class="a" style="left:1753px;top:707px;width:1px;height:35px;background:#c8c8c8"></div>
<div class="a" style="left:1969px;top:707px;width:1px;height:35px;background:#c8c8c8"></div>
<div class="a th" style="right:1367px;top:714px">Количество совпадений:</div>
<div class="a th" style="left:1561px;top:714px">-</div>
<div class="a th" style="left:1764px;top:714px">-</div>
<div class="a th" style="left:1980px;top:714px">-</div>
<div class="a" style="left:2199px;top:28px;width:10px;height:686px;background:#d5d5d5;border-radius:5px"></div>
<div class="a" style="left:2199px;top:28px;width:10px;height:10px;background:#9b9b9b;border-radius:5px"></div>
<svg style="left:2202px;top:11.5px" width="5" height="4.5" viewBox="0 0 5 4.5" fill="#cdcdcd"><path d="M0 4.5h5L2.5 0z"/></svg>
<svg style="left:2202px;top:726px" width="5" height="4.5" viewBox="0 0 5 4.5" fill="#444"><path d="M0 0h5L2.5 4.5z"/></svg>
</div>
<!-- lists info -->
<div class="a" style="left:291px;top:1154px;color:#1fa24f;font-size:16.45px">Сведения о перечнях Росфинмониторинга - <span style="color:#2458b0;text-decoration:underline">перейти к перечням</span>:</div>
<div id="t2" class="a" style="left:290px;top:1180px;width:1798px;height:143px;border:1px solid #a0a0a0;overflow:hidden;background:#fff">
<div class="a" style="left:1px;top:1px;width:31px;height:33px;background:#f2f2f2"></div>
<div class="a" style="left:35px;top:1px;width:1299px;height:33px;background:#f2f2f2"></div>
<div class="a" style="left:1337px;top:1px;width:143px;height:33px;background:#f2f2f2"></div>
<div class="a" style="left:1483px;top:1px;width:132px;height:33px;background:#f2f2f2"></div>
<div class="a" style="left:1618px;top:1px;width:177px;height:33px;background:#f2f2f2"></div>
<div class="a" style="left:33px;top:0px;width:1px;height:35px;background:#c8c8c8"></div>
<div class="a" style="left:1335px;top:0px;width:1px;height:35px;background:#c8c8c8"></div>
<div class="a" style="left:1481px;top:0px;width:1px;height:35px;background:#c8c8c8"></div>
<div class="a" style="left:1616px;top:0px;width:1px;height:35px;background:#c8c8c8"></div>
<div class="a" style="left:0px;top:35px;width:1796px;height:1px;background:#c8c8c8"></div>
<div class="a th" style="left:9px;top:7px;">N</div>
<div class="a th" style="left:44px;top:7px;">Тип перечня</div>
<div class="a th" style="left:1346px;top:7px;">Дата сведений</div>
<div class="a th" style="left:1492px;top:7px;">Дата загрузки</div>
<div class="a th" style="left:1627px;top:7px;">Количество записей</div>
<div class="a" style="left:0px;top:37px;width:33px;height:31px;background:#fde491"></div>
<div class="a" style="left:34px;top:37px;width:1301px;height:31px;background:#fff1c6"></div>
<div class="a" style="left:1336px;top:37px;width:145px;height:31px;background:#fff1c6"></div>
<div class="a" style="left:1482px;top:37px;width:134px;height:31px;background:#fff1c6"></div>
<div class="a" style="left:1617px;top:37px;width:179px;height:31px;background:#fff1c6"></div>
<div class="a" style="left:0px;top:69px;width:1796px;height:1px;background:#e4e4e4"></div>
<div class="a" style="right:1773px;top:43px;color:#111">1</div>
<div class="a " style="left:44px;top:43px;color:#111">Решение комиссии о замораживании денежных средств или иного имущества</div>
<div class="a " style="left:1347px;top:43px;color:#111">17.04.2026</div>
<div class="a " style="left:1492px;top:43px;color:#333">20.04.2026</div>
<div class="a" style="right:10px;top:43px;color:#333">3 278</div>
<div class="a" style="left:0px;top:103px;width:1796px;height:1px;background:#e4e4e4"></div>
<div class="a" style="right:1773px;top:77px;color:#111">2</div>
<div class="a " style="left:44px;top:77px;color:#111">Связь с терроризмом и распространением оружия массового уничтожения</div>
<div class="a " style="left:1347px;top:77px;color:#111">16.04.2026</div>
<div class="a " style="left:1492px;top:77px;color:#333">16.04.2026</div>
<div class="a" style="right:10px;top:77px;color:#333">1 428</div>
<div class="a" style="left:0px;top:137px;width:1796px;height:1px;background:#e4e4e4"></div>
<div class="a" style="right:1773px;top:111px;color:#111">3</div>
<div class="a " style="left:44px;top:111px;color:#111">Причастность к экстремистской деятельности или терроризму</div>
<div class="a " style="left:1347px;top:111px;color:#111">16.04.2026</div>
<div class="a " style="left:1492px;top:111px;color:#333">17.04.2026</div>
<div class="a" style="right:10px;top:111px;color:#333">24 740</div>
</div>
<!-- results -->
<div class="a" style="left:2101px;top:1153px;width:3px;height:170px;background:#0f9a4a"></div>
<div class="a" style="left:2114px;top:1153px;color:#1fa24f;font-size:16.9px">Результаты проверки:</div>
<div class="a lbl" style="left:2114px;top:1183px">Количество проверенных ЮЛ:</div>
<div class="a inp l" style="left:2428px;top:1183px;width:77px;text-align:right;padding-right:3px;color:#333">0</div>
<div class="a lbl" style="left:2114px;top:1223px">Количество проверенных ФЛ:</div>
<div class="a inp l" style="left:2428px;top:1223px;width:77px;text-align:right;padding-right:3px;color:#333">1 321</div>
<div class="a lbl" style="left:2114px;top:1263px;letter-spacing:.06px">Количество лиц, имеющих совпадения:</div>
<div class="a inp l" style="left:2428px;top:1263px;width:77px;text-align:right;padding-right:3px;color:#333">0</div>
<!-- bottom row -->
<div class="a lbl" style="left:276px;top:1344px">Ответственный:</div>
<div class="a inp" style="left:406px;top:1344px;width:513px;color:#333">Администратор<div class="a ib" style="right:25px"></div><div class="a ib" style="right:-1px"></div></div>
<svg style="left:875px;top:1356px" width="8" height="5" viewBox="0 0 8 5" fill="#333"><path d="M0 0h8L4 5z"/></svg>
<svg style="left:899px;top:1352px" width="13" height="13" viewBox="0 0 13 13" fill="none" stroke="#444" stroke-width="1"><path d="M4.5 4V.5h8V8H9"/><rect x=".5" y="4.5" width="8" height="8"/></svg>
<div class="a lbl" style="left:932px;top:1344px">Комментарий:</div>
<div class="a inp" style="left:1046px;top:1344px;width:513px"></div>
</div><!-- /main -->
<!-- bottom desktop strip -->
<div class="a" style="left:0;top:1389px;width:2544px;height:7px;background:linear-gradient(90deg,#b9b5b1 0,#b9b5b1 44px,#b3a69b 45px,#d8cabc 300px,#e6d9c8 480px,#c9c3ba 560px,#a9a9a9 620px,#a8a8a8 1163px,#dadada 1164px,#dadada 1219px,#888 1220px,#f0f0f0 1221px,#f0f0f0 1224px,#9e9e9e 1225px,#a5a5a5 2300px,#b8a999 2400px,#b3aca3 2537px,#777 2538px,#b3aca3 2539px)"></div>
<div class="a" style="left:-2px;top:1364px;width:39px;height:25px;background:#fff;border:1px solid #70747c;box-shadow:3px 5px 4px rgba(0,0,0,.4);color:#505050;font-size:15.5px;letter-spacing:-.6px;line-height:23.5px;text-indent:-1.2px;overflow:hidden">Пуск</div>
</body></html>
